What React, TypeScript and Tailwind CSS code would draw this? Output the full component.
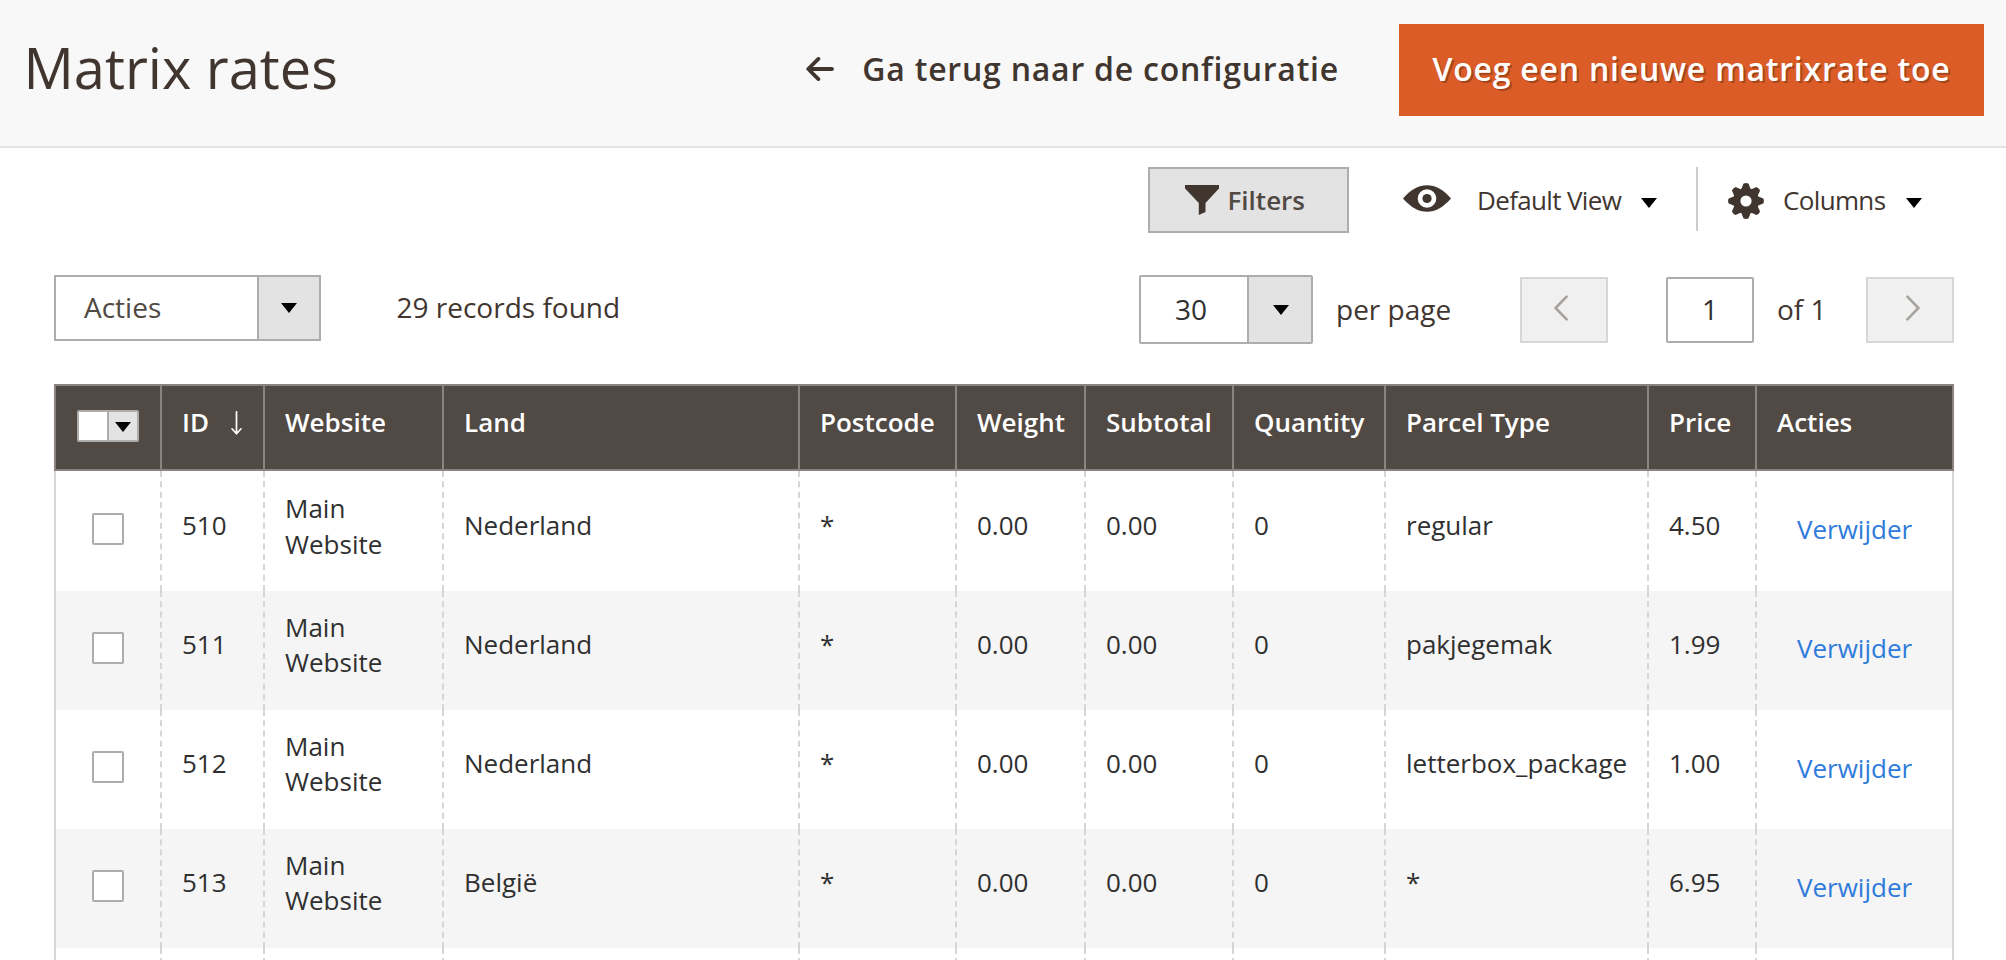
import type { ReactNode } from 'react';

interface Rate {
  id: number;
  country: string;
  parcel: string;
  price: string;
}

const rates: Rate[] = [
  { id: 510, country: 'Nederland', parcel: 'regular', price: '4.50' },
  { id: 511, country: 'Nederland', parcel: 'pakjegemak', price: '1.99' },
  { id: 512, country: 'Nederland', parcel: 'letterbox_package', price: '1.00' },
  { id: 513, country: 'België', parcel: '*', price: '6.95' },
];

function Caret() {
  return (
    <svg className="block h-[10px] w-[16px] shrink-0" viewBox="0 0 16 10">
      <path d="M0 0h16L8 10z" fill="#000" />
    </svg>
  );
}

function Chevron({ flip = false }: { flip?: boolean }) {
  return (
    <svg className={flip ? 'block h-[26px] w-[14px] -scale-x-100' : 'block h-[26px] w-[14px]'} viewBox="0 0 14 26">
      <path d="M12.6 1.6L1.6 13l11 11.4" fill="none" stroke="#a7a39f" strokeWidth="2.6" strokeLinecap="round" strokeLinejoin="round" />
    </svg>
  );
}

function Header() {
  return (
    <header className="flex h-[148px] items-start border-b-2 border-[#e3e3e3] bg-[#f8f8f8]">
      <h1 className="mt-[29px] ml-[23.5px] grow text-[56px] leading-[76px]">Matrix rates</h1>
      <a className="mt-[47px] mr-[60px] flex items-start text-[32px] leading-[44px] font-semibold tracking-[0.77px]">
        <svg className="mt-[10px] mr-[28px] block h-[24px] w-[28px]" viewBox="0 0 28 24">
          <path d="M12.400 1.900L2.200 12L12.400 22.100M2.500 12H26" fill="none" stroke="#41362f" strokeWidth="3.800" strokeLinecap="round" strokeLinejoin="round" />
        </svg>
        Ga terug naar de configuratie
      </a>
      <button className="mt-6 mr-[22px] h-[92px] w-[585px] bg-[#db5c26] pb-[2px] text-[32px] leading-[44px] font-semibold tracking-[0.77px] whitespace-nowrap text-white [text-shadow:2px_2px_0_rgba(0,0,0,0.25)]">
        Voeg een nieuwe matrixrate toe
      </button>
    </header>
  );
}

function Toolbar() {
  return (
    <div className="flex h-[66px] items-start justify-end text-[26px] leading-[36px]">
      <button className="flex h-[66px] w-[201px] items-start border-2 border-[#adadad] bg-[#e3e3e3] pl-[35px] font-semibold text-[#514943]">
        <svg className="mt-[16px] mr-[8.5px] block h-[30px] w-[34px]" viewBox="0 0 34 30">
          <path d="M0 0h34v3.500L20.500 18v9L13.800 30V18L0 3.500z" fill="#41362f" />
        </svg>
        <span className="mt-[13px]">Filters</span>
      </button>
      <button className="ml-[54px] flex h-[66px] items-start">
        <svg className="mt-[18px] block h-[27px] w-[48px]" viewBox="0 0 48 27">
          <path d="M0 13.500C8 4.500 15.500 0.300 24 0.300s16 4.200 24 13.200C40 22.500 32.500 26.700 24 26.700S8 22.500 0 13.500z" fill="#41362f" />
          <circle cx="24" cy="13.500" r="9.300" fill="#fff" />
          <circle cx="24" cy="13.500" r="4.600" fill="#41362f" />
        </svg>
        <span className="mt-[15px] ml-[26px] w-[144px] text-left tracking-[-0.65px] whitespace-nowrap">Default View</span>
        <span className="mt-[31px] ml-[20px]"><Caret /></span>
      </button>
      <div className="ml-[39px] h-[64px] w-[2px] bg-[#ccc]" />
      <button className="mr-[32px] ml-[30px] flex h-[66px] items-start">
        <svg className="mt-[16px] block size-[36px]" viewBox="-18 -18 36 36">
          <g fill="#41362f">
            {[0, 45, 90, 135, 180, 225, 270, 315].map((a) => (
              <path key={a} d="M-5 -11L-2.600 -17.300Q0 -18.500 2.600 -17.300L5 -11z" transform={`rotate(${a})`} />
            ))}
          </g>
          <circle r="9.300" fill="none" stroke="#41362f" strokeWidth="7.400" />
        </svg>
        <span className="mt-[15px] ml-[19px] w-[103px] text-left tracking-[-0.65px] whitespace-nowrap">Columns</span>
        <span className="mt-[31px] ml-[20px]"><Caret /></span>
      </button>
    </div>
  );
}

function Paging() {
  return (
    <div className="mt-[42px] flex h-[69px] items-start text-[28px] leading-[38px]">
      <div className="flex h-[66px] w-[267px] border-2 border-[#adadad]">
        <span className="mt-[11px] grow pl-[28px] text-[#514943]">Acties</span>
        <span className="flex w-[62px] items-center justify-center border-l-2 border-[#adadad] bg-[#e3e3e3] pb-[1px]"><Caret /></span>
      </div>
      <span className="mt-[13px] ml-[75.5px] grow">29 records found</span>
      <div className="flex h-[69px] w-[174px] rounded-[2px] border-2 border-[#adadad] text-[#303030]">
        <span className="mt-[13px] grow pr-[6px] text-center">30</span>
        <span className="flex w-[64px] items-center justify-center border-l-2 border-[#adadad] bg-[#e3e3e3] pl-[2px]"><Caret /></span>
      </div>
      <span className="mt-[15px] ml-[23px] w-[184px]">per page</span>
      <button className="mt-[2px] flex h-[66px] w-[88px] justify-center border-2 border-[#d6d6d6] bg-[#f0f0f0] pt-[16px] pr-[7px]"><Chevron /></button>
      <span className="mt-[2px] ml-[58px] h-[66px] w-[88px] rounded-[2px] border-2 border-[#adadad] pt-[11px] text-center text-[#303030]">1</span>
      <span className="mt-[15px] ml-[23px] w-[89px]">of 1</span>
      <button className="mt-[2px] flex h-[66px] w-[88px] justify-center border-2 border-[#d6d6d6] bg-[#f0f0f0] pt-[16px] pl-[5px]"><Chevron flip /></button>
    </div>
  );
}

function Head({ children }: { children: ReactNode }) {
  return (
    <th className="h-[87px] border-y-2 border-l-2 border-[#8a837f] bg-[#514943] p-0 pt-[19px] pl-[20px] text-left align-top font-semibold whitespace-nowrap text-white last:border-r-2">
      {children}
    </th>
  );
}

function Cell({ children }: { children?: ReactNode }) {
  return (
    <td className="border-l-2 border-dashed border-[#d6d6d6] p-0 pt-[36px] pl-[20px] align-top whitespace-nowrap group-first:pt-[37px]">{children}</td>
  );
}

function Check() {
  return <span className="block size-[32px] rounded-[2px] border-2 border-[#adadad] bg-white" />;
}

function Grid() {
  return (
    <table className="mt-[40px] w-[1900px] table-fixed border-separate border-spacing-0 text-[26px] leading-[35.36px] text-[#303030]">
      <colgroup>
        <col className="w-[106px]" />
        <col className="w-[103px]" />
        <col className="w-[179px]" />
        <col className="w-[356px]" />
        <col className="w-[157px]" />
        <col className="w-[129px]" />
        <col className="w-[148px]" />
        <col className="w-[152px]" />
        <col className="w-[263px]" />
        <col className="w-[108px]" />
        <col className="w-[199px]" />
      </colgroup>
      <thead>
        <tr>
          <Head>
            <span className="mt-[5px] ml-[1px] flex h-[32px] w-[62px] rounded-[2px] border-2 border-[#adadad] bg-white">
              <span className="ml-[28px] flex grow items-center justify-center border-l-2 border-[#adadad] bg-[#e3e3e3] pt-[2px]"><Caret /></span>
            </span>
          </Head>
          <Head>
            <span className="flex">
              ID
              <svg className="mt-[6px] ml-[22px] block h-[24px] w-[11px]" viewBox="0 0 11 24">
                <path d="M5.500 0.800V22M1 17.800L5.500 22.800L10 17.800" fill="none" stroke="#fff" strokeWidth="1.700" strokeLinecap="round" strokeLinejoin="round" />
              </svg>
            </span>
          </Head>
          <Head>Website</Head>
          <Head>Land</Head>
          <Head>Postcode</Head>
          <Head>Weight</Head>
          <Head>Subtotal</Head>
          <Head>Quantity</Head>
          <Head>Parcel Type</Head>
          <Head>Price</Head>
          <Head>Acties</Head>
        </tr>
      </thead>
      <tbody>
        {rates.map((r) => (
          <tr key={r.id} className="group h-[119px] odd:bg-white even:bg-[#f5f5f5] first:h-[120px]">
            <td className="border-l-2 border-[#d6d6d6] p-0 pt-[41px] pl-[36px] align-top group-first:pt-[42px]"><Check /></td>
            <Cell>{r.id}</Cell>
            <td className="border-l-2 border-dashed border-[#d6d6d6] p-0 pt-[19px] pl-[20px] align-top group-first:leading-[36px]">Main<br />Website</td>
            <Cell>{r.country}</Cell>
            <Cell>*</Cell>
            <Cell>0.00</Cell>
            <Cell>0.00</Cell>
            <Cell>0</Cell>
            <Cell>{r.parcel}</Cell>
            <Cell>{r.price}</Cell>
            <td className="border-r-2 border-l-2 border-[#d6d6d6] p-0 pt-[41px] pl-[40px] align-top text-[#2f7bdb] [border-left-style:dashed] group-[:nth-child(2)]:pt-[40px]">Verwijder</td>
          </tr>
        ))}
        <tr className="h-[119px]">
          <td className="border-l-2 border-[#d6d6d6]" />
          <Cell /><Cell /><Cell /><Cell /><Cell /><Cell /><Cell /><Cell /><Cell />
          <td className="border-r-2 border-l-2 border-[#d6d6d6] [border-left-style:dashed]" />
        </tr>
      </tbody>
    </table>
  );
}

export default function App() {
  return (
    <div className="h-[960px] w-[2006px] overflow-hidden bg-white font-['Open_Sans','Noto_Sans',sans-serif] text-[#41362f]">
      <Header />
      <main className="pt-[19px] pr-[52px] pl-[54px]">
        <Toolbar />
        <Paging />
        <Grid />
      </main>
    </div>
  );
}
